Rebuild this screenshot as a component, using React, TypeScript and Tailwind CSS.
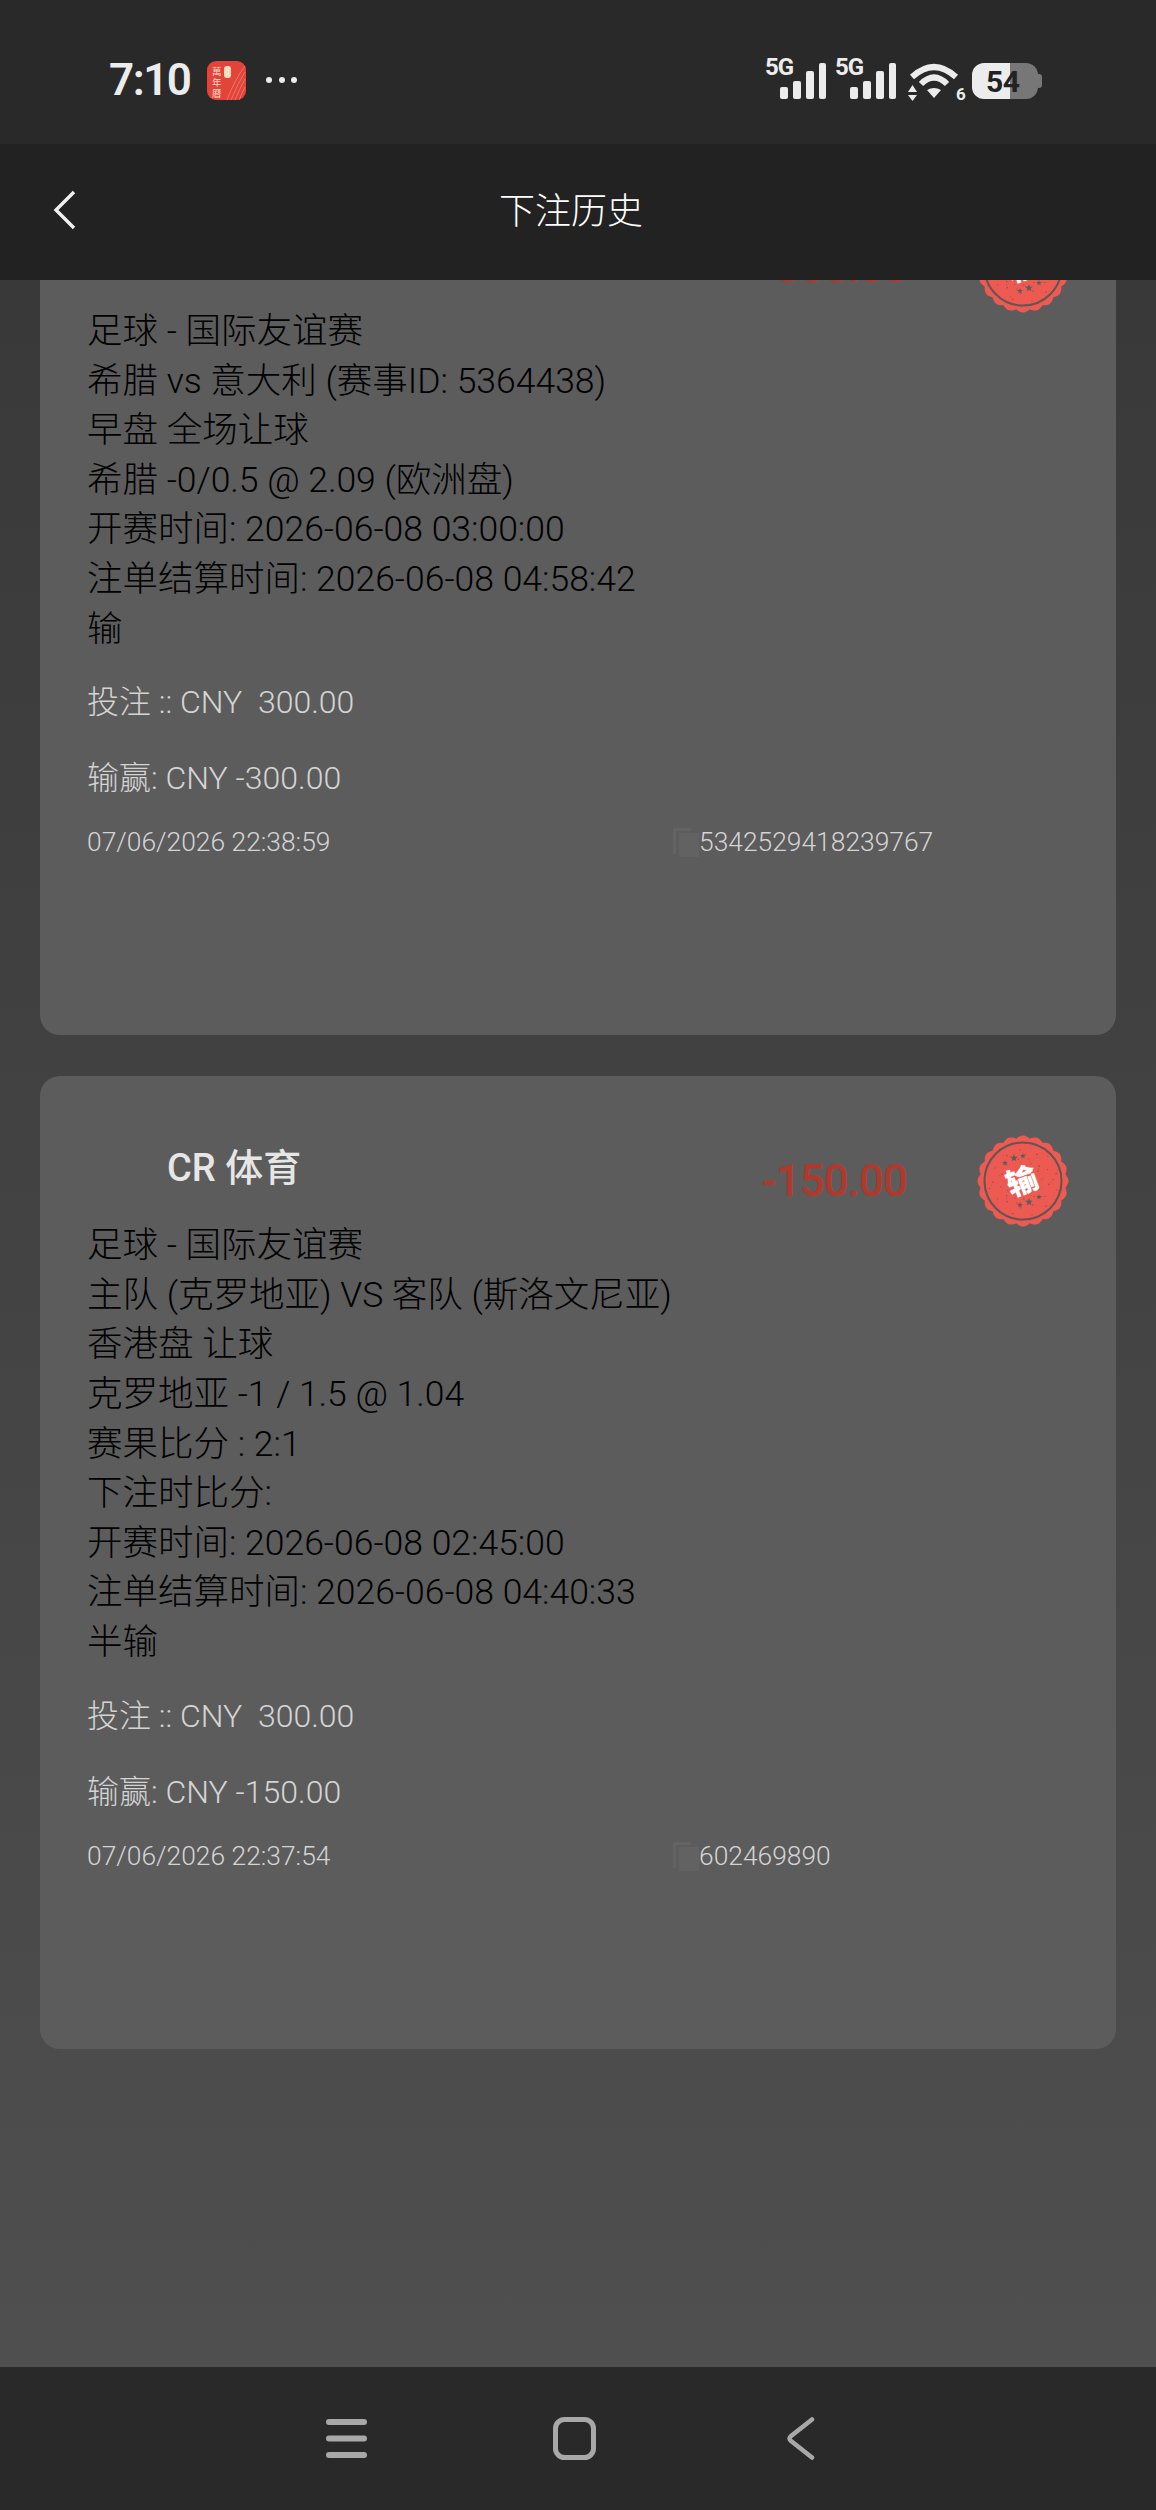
import React from "react";

const FONT = "font-['Roboto','Noto_Sans_CJK_SC',sans-serif]";

function scallop(cx: number, cy: number, r: number, amp: number, n: number) {
  const pts: string[] = [];
  for (let i = 0; i <= 240; i++) {
    const a = (i / 240) * Math.PI * 2;
    const rr = r + amp * Math.abs(Math.cos((a * n) / 2)) - amp / 2;
    pts.push(`${(cx + rr * Math.cos(a)).toFixed(2)},${(cy + rr * Math.sin(a)).toFixed(2)}`);
  }
  return pts.join(" ");
}

function star(cx: number, cy: number, r: number) {
  const pts: string[] = [];
  for (let i = 0; i < 10; i++) {
    const a = -Math.PI / 2 + (i * Math.PI) / 5;
    const rr = i % 2 ? r * 0.42 : r;
    pts.push(`${(cx + rr * Math.cos(a)).toFixed(2)},${(cy + rr * Math.sin(a)).toFixed(2)}`);
  }
  return pts.join(" ");
}

const SPECKS = Array.from({ length: 90 }, (_, i) => {
  const a = (i * 137.5 * Math.PI) / 180;
  const d = 17 + ((i * 29) % 24);
  return { x: 46 + d * Math.cos(a), y: 46 + d * Math.sin(a), r: 0.3 + ((i * 7) % 4) * 0.16 };
});

function Stamp() {
  return (
    <svg width="92" height="92" viewBox="0 0 92 92" className="shrink-0">
      <polygon points={scallop(46, 46, 44.2, 2.6, 20)} fill="#ec5a52" />
      <circle cx="46" cy="46" r="38.5" fill="none" stroke="#5f5554" strokeWidth="2" />
      {SPECKS.map((s, i) => (
        <circle key={i} cx={s.x} cy={s.y} r={s.r} fill="#8f5350" />
      ))}
      <g fill="#5c5c5c">
        <polygon points={star(28, 28, 3)} />
        <polygon points={star(37, 23, 4)} />
        <polygon points={star(46, 21, 3)} />
        <polygon points={star(43, 70, 3)} />
        <polygon points={star(52, 67, 4)} />
        <polygon points={star(62, 62, 3)} />
      </g>
      <text
        x="45"
        y="57"
        textAnchor="middle"
        fontSize="31"
        fontWeight="900"
        fill="#ffffff"
        fontFamily="'Noto Sans CJK SC', sans-serif"
        transform="rotate(-20 46 46)"
      >
        输
      </text>
    </svg>
  );
}

function CopyIcon() {
  return (
    <svg width="28" height="30" viewBox="0 0 28 30" className="shrink-0">
      <path d="M1 1h18v3H4v23H1z" fill="#636363" />
      <rect x="7" y="6" width="20" height="24" fill="#626262" />
    </svg>
  );
}

type CardProps = {
  title: string;
  amount: string;
  lines: string[];
  stake: string;
  result: string;
  time: string;
  id: string;
};

function Card({ title, amount, lines, stake, result, time, id }: CardProps) {
  return (
    <div className="mx-[40px] rounded-[20px] bg-[#5c5c5c] pb-[175px]">
      <div className="flex h-[145px] pr-[47px]">
        <div className="mt-[65px] ml-[127px] flex-1 text-[38px] leading-[54px] font-medium text-[#e6e6e6]">{title}</div>
        <div className="mt-[75px] mr-[70px] text-[44px] leading-[60px] font-medium tracking-[-1px] text-[#b0392d]">{amount}</div>
        <div className="mt-[59px]">
          <Stamp />
        </div>
      </div>
      <div className="px-[47px] text-[35.5px] leading-[49.6px] font-light text-black">
        {lines.map((l, i) => (
          <div key={i}>{l}</div>
        ))}
      </div>
      <div className="mt-[25px] px-[47px] text-[32px] leading-[46px] font-light whitespace-pre text-[#d4d4d4]">{stake}</div>
      <div className="mt-[30px] px-[47px] text-[32px] leading-[46px] font-light text-[#d4d4d4]">{result}</div>
      <div className="mt-[23px] flex items-center pl-[47px] text-[26.4px] leading-[36px] font-light text-[#d4d4d4]">
        <div className="w-[585px]">{time}</div>
        <CopyIcon />
        <div className="-ml-[1px]">{id}</div>
      </div>
    </div>
  );
}

function Bars({ x }: { x: number }) {
  return (
    <g fill="#ececec">
      <text x={x} y="20" fontSize="24" fontWeight="700" letterSpacing="-1" fontFamily="Roboto, sans-serif">5G</text>
      <rect x={x + 15} y="32" width="8" height="12" rx="2" />
      <rect x={x + 28} y="26" width="8" height="18" rx="2" />
      <rect x={x + 41} y="16" width="8" height="28" rx="2" />
      <rect x={x + 54} y="8" width="7" height="36" rx="2" />
    </g>
  );
}

function StatusIcons() {
  return (
    <svg width="280" height="60" viewBox="0 -10 280 60" className="-mt-[10px] block">
      <Bars x={0} />
      <Bars x={70} />
      <g stroke="#ececec" fill="none" strokeLinecap="butt">
        <path d="M147 22 Q 169 2 191 22" strokeWidth="6" />
        <path d="M156 29 Q 169 16 182 29" strokeWidth="6" />
      </g>
      <g fill="#ececec">
        <path d="M162 35 Q 169 31 176 35 L169 43z" />
        <path d="M143 37h9l-4.500-7z" />
        <path d="M143 40h9l-4.500 6z" />
        <text x="191" y="45" fontSize="17" fontWeight="700" fontFamily="Roboto, sans-serif">6</text>
      </g>
      <path d="M207 20a12 12 0 0 1 12-12h26v36h-26a12 12 0 0 1-12-12z" fill="#ececec" />
      <path d="M245 8h16a12 12 0 0 1 12 12v12a12 12 0 0 1-12 12h-16z" fill="#777777" />
      <path d="M273 19h1a3 3 0 0 1 3 3v8a3 3 0 0 1-3 3h-1z" fill="#777777" />
      <text x="221" y="37" fontSize="30" fontWeight="700" letterSpacing="-0.500" fill="#222222" fontFamily="Roboto, sans-serif">54</text>
    </svg>
  );
}

function AppIcon() {
  return (
    <svg width="39" height="39" viewBox="0 0 39 39" className="block">
      <rect width="39" height="39" rx="9" fill="#e2443a" />
      <g fill="none" stroke="#f08a7c" strokeWidth="0.7">
        <path d="M20 39 Q 28 18 38 5" />
        <path d="M24 39 Q 31 22 38 11" />
        <path d="M28 39 Q 33 27 38 18" />
        <path d="M32 39 Q 35 32 38 26" />
      </g>
      <rect x="17" y="5" width="7" height="12" rx="3" fill="#f8dcc0" />
      <g fill="#fbd8c4" fontSize="9.500" fontFamily="'Noto Sans CJK TC', sans-serif">
        <text x="5" y="14">萬</text>
        <text x="5" y="25">年</text>
        <text x="5" y="36">曆</text>
      </g>
    </svg>
  );
}

export default function App() {
  return (
    <div className={`flex h-[2510px] w-[1156px] flex-col overflow-hidden bg-[#292929] ${FONT}`}>
      <div className="relative z-10 flex h-[144px] items-center bg-[#292929] pt-[16px] pr-[111px] pl-[109px]">
        <div className="text-[44px] leading-none font-semibold tracking-[-1.5px] text-[#ececec]">7:10</div>
        <div className="ml-[17px]">
          <AppIcon />
        </div>
        <div className="ml-[20px] flex gap-[6.5px]">
          <span className="size-[6px] rounded-full bg-[#ececec]" />
          <span className="size-[6px] rounded-full bg-[#ececec]" />
          <span className="size-[6px] rounded-full bg-[#ececec]" />
        </div>
        <div className="ml-auto">
          <StatusIcons />
        </div>
      </div>

      <div className="relative z-10 flex h-[136px] items-center justify-center bg-[#222222] pr-[14px] pb-[8px]">
        <svg width="26" height="40" viewBox="0 0 26 40" className="absolute top-[46px] left-[52px]">
          <path d="M22 2 L4 20 L22 38" fill="none" stroke="#f0f0f0" strokeWidth="3.400" />
        </svg>
        <div className="font-['Noto_Sans_CJK_SC',sans-serif] text-[36px] font-light text-white">下注历史</div>
      </div>

      <div className="flex-1 overflow-hidden bg-gradient-to-b from-[#393939] to-[#4f4f4f]">
        <div className="-mt-[118px] flex flex-col gap-[41px]">
          <Card
            title="CR 体育"
            amount="-300.00"
            lines={[
              "足球 - 国际友谊赛",
              "希腊 vs 意大利 (赛事ID: 5364438)",
              "早盘 全场让球",
              "希腊 -0/0.5 @ 2.09 (欧洲盘)",
              "开赛时间: 2026-06-08 03:00:00",
              "注单结算时间: 2026-06-08 04:58:42",
              "输",
            ]}
            stake="投注 :: CNY  300.00"
            result="输赢: CNY -300.00"
            time="07/06/2026 22:38:59"
            id="5342529418239767"
          />
          <Card
            title="CR 体育"
            amount="-150.00"
            lines={[
              "足球 - 国际友谊赛",
              "主队 (克罗地亚) VS 客队 (斯洛文尼亚)",
              "香港盘 让球",
              "克罗地亚 -1 / 1.5 @ 1.04",
              "赛果比分 : 2:1",
              "下注时比分:",
              "开赛时间: 2026-06-08 02:45:00",
              "注单结算时间: 2026-06-08 04:40:33",
              "半输",
            ]}
            stake="投注 :: CNY  300.00"
            result="输赢: CNY -150.00"
            time="07/06/2026 22:37:54"
            id="602469890"
          />
        </div>
      </div>

      <div className="flex h-[143px] items-start bg-[#292929] pt-[50px] pl-[326px]">
        <svg width="41" height="39" viewBox="0 0 41 39" className="mt-[2px] block">
          <g stroke="#a8a8a8" strokeWidth="6" strokeLinecap="round">
            <path d="M3 3h35M3 19.500h35M3 36h35" />
          </g>
        </svg>
        <svg width="43" height="43" viewBox="0 0 43 43" className="ml-[186px] block">
          <rect x="2.500" y="2.500" width="38" height="38" rx="9" fill="none" stroke="#a8a8a8" strokeWidth="5" />
        </svg>
        <svg width="28" height="43" viewBox="0 0 28 43" className="ml-[191px] block">
          <path d="M25 2.500 L3.500 19.500 Q1.500 21.500 3.500 23.500 L25 40.500" fill="none" stroke="#a8a8a8" strokeWidth="4.500" strokeLinecap="round" />
        </svg>
      </div>
    </div>
  );
}
